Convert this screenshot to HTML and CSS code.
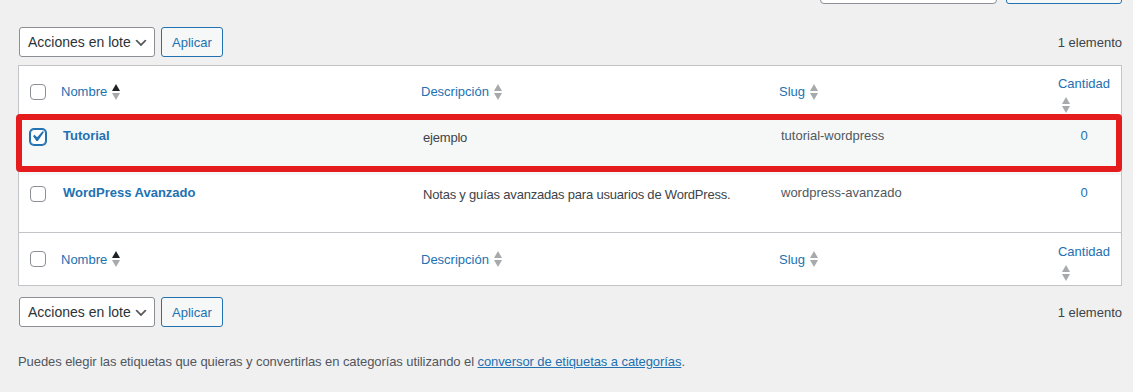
FILE: index.html
```html
<!DOCTYPE html>
<html lang="es">
<head>
    <meta charset="UTF-8">
    <meta name="viewport" content="width=device-width, initial-scale=1.0">
    <title>Etiquetas</title>
    <link rel="stylesheet" href="styles.css">
</head>
<body>
<div class="wrap">

    <!-- caja de busqueda (cortada arriba) -->
    <div class="search-box">
        <span class="search-input"></span>
        <span class="search-btn"></span>
    </div>

    <div class="tablenav top">
        <div class="bulk">
            <div class="select">Acciones en lote
                <svg class="chev" width="16" height="16" viewBox="0 0 20 20"><path d="M5 6l5 5 5-5 2 1-7 7-7-7 2-1z" fill="#555"/></svg>
            </div>
            <button class="button">Aplicar</button>
        </div>
        <div class="count">1 elemento</div>
    </div>

    <div class="table-holder">
        <table class="tags">
            <colgroup>
                <col class="c-check">
                <col class="c-name">
                <col class="c-desc">
                <col class="c-slug">
                <col class="c-num">
            </colgroup>
            <thead>
                <tr>
                    <th class="check"><span class="cb"></span></th>
                    <th><a class="sort-link">Nombre <span class="sort"><i class="up dark"></i><i class="down"></i></span></a></th>
                    <th><a class="sort-link">Descripción <span class="sort"><i class="up"></i><i class="down"></i></span></a></th>
                    <th><a class="sort-link">Slug <span class="sort"><i class="up"></i><i class="down"></i></span></a></th>
                    <th class="num"><a class="num-link">Cantidad<span class="sort block"><i class="up"></i><i class="down"></i></span></a></th>
                </tr>
            </thead>
            <tbody>
                <tr class="alt">
                    <th class="check"><span class="cb on"><svg width="21" height="21" viewBox="0 0 20 20"><path d="M14.83 4.89l1.34.94-5.81 8.38H9.02L5.78 9.67l1.34-1.25 2.57 2.4z" fill="#2271b1"/></svg></span></th>
                    <td><a class="row-title">Tutorial</a></td>
                    <td class="desc">ejemplo</td>
                    <td class="slug">tutorial-wordpress</td>
                    <td class="num"><a>0</a></td>
                </tr>
                <tr>
                    <th class="check"><span class="cb"></span></th>
                    <td><a class="row-title">WordPress Avanzado</a></td>
                    <td class="desc">Notas y guías avanzadas para usuarios de WordPress.</td>
                    <td class="slug">wordpress-avanzado</td>
                    <td class="num"><a>0</a></td>
                </tr>
            </tbody>
            <tfoot>
                <tr>
                    <th class="check"><span class="cb"></span></th>
                    <th><a class="sort-link">Nombre <span class="sort"><i class="up dark"></i><i class="down"></i></span></a></th>
                    <th><a class="sort-link">Descripción <span class="sort"><i class="up"></i><i class="down"></i></span></a></th>
                    <th><a class="sort-link">Slug <span class="sort"><i class="up"></i><i class="down"></i></span></a></th>
                    <th class="num"><a class="num-link">Cantidad<span class="sort block"><i class="up"></i><i class="down"></i></span></a></th>
                </tr>
            </tfoot>
        </table>
        <!-- marca roja sobre la fila -->
        <div class="highlight"></div>
    </div>

    <div class="tablenav bottom">
        <div class="bulk">
            <div class="select">Acciones en lote
                <svg class="chev" width="16" height="16" viewBox="0 0 20 20"><path d="M5 6l5 5 5-5 2 1-7 7-7-7 2-1z" fill="#555"/></svg>
            </div>
            <button class="button">Aplicar</button>
        </div>
        <div class="count">1 elemento</div>
    </div>

    <p class="notes">Puedes elegir las etiquetas que quieras y convertirlas en categorías utilizando el <a href="#">conversor de etiquetas a categorías</a>.</p>
</div>
</body>
</html>
```

FILE: styles.css
```css
body {
  margin: 0;
  background-color: #f0f0f1;
  font-family: "Liberation Sans", Arial, sans-serif;
  font-size: 13px;
  color: #3c434a;
  overflow: hidden;
}

.wrap {
  padding: 0 11px 0 18px;
}

.search-box {
  display: flex;
  justify-content: flex-end;
  margin-top: -26px;
  height: 30px;
}
.search-input {
  width: 177px;
  height: 30px;
  box-sizing: border-box;
  background: #fff;
  border: 1px solid #8c8f94;
  border-radius: 4px;
}
.search-btn {
  width: 116px;
  height: 30px;
  margin-left: 9px;
  box-sizing: border-box;
  background: #f6f7f7;
  border: 1px solid #2271b1;
  border-radius: 3px;
}

.tablenav {
  display: flex;
  justify-content: space-between;
  align-items: center;
  height: 30px;
}
.tablenav.top {
  padding-top: 23px;
  margin-bottom: 8px;
}
.tablenav.bottom {
  margin-top: 11px;
}

.bulk {
  display: flex;
  margin-left: 1px;
}

.select {
  display: flex;
  align-items: center;
  justify-content: space-between;
  width: 136px;
  height: 30px;
  box-sizing: border-box;
  padding: 0 5px 0 8px;
  background: #fff;
  border: 1px solid #8c8f94;
  border-radius: 3px;
  font-size: 14px;
  color: #2c3338;
}
.chev {
  margin-top: 1px;
}

.button {
  height: 30px;
  margin-left: 6px;
  padding: 0 10px;
  background: #f6f7f7;
  border: 1px solid #2271b1;
  border-radius: 3px;
  color: #2271b1;
  font-family: inherit;
  font-size: 13px;
}

.count {
  color: #3c434a;
}

/* tabla */
.table-holder {
  position: relative;
}

.tags {
  width: 100%;
  table-layout: fixed;
  border-collapse: separate;
  border-spacing: 0;
  background: #fff;
  border: 1px solid #c3c4c7;
}
.c-check { width: 32px; }
.c-name { width: 360px; }
.c-desc { width: 358px; }
.c-slug { width: 278px; }
.c-num { width: 74px; }

.tags th, .tags td {
  box-sizing: border-box;
  text-align: left;
  font-weight: normal;
  line-height: 19px;
}

.tags thead th {
  height: 52px;
  padding: 0 10px;
  vertical-align: middle;
  border-bottom: 1px solid #c3c4c7;
}
.tags tfoot th {
  height: 53px;
  padding: 0 10px;
  vertical-align: middle;
  border-top: 1px solid #c3c4c7;
}
.tags thead th.num, .tags tfoot th.num {
  padding-top: 4px;
}

.tags tbody td, .tags tbody th {
  height: 57px;
  padding: 8px 10px 8px 12px;
  vertical-align: top;
  color: #50575e;
}
.tags tbody tr.alt td, .tags tbody tr.alt th {
  background: #f6f7f7;
}
.tags tbody td.desc {
  padding-top: 10px;
  color: #3c434a;
  letter-spacing: -0.2px;
}

.tags th.check {
  padding: 0 0 0 11px;
}
.tags tbody th.check {
  padding: 11px 0 0 11px;
}

.cb {
  position: relative;
  display: block;
  width: 16px;
  height: 16px;
  box-sizing: border-box;
  background: #fff;
  border: 1px solid #8c8f94;
  border-radius: 4px;
}
.cb.on {
  border-color: #2271b1;
  box-shadow: 0 0 0 1px #2271b1;
}
.cb svg {
  position: absolute;
  top: -4px;
  left: -4px;
}

a {
  color: #2271b1;
}

.sort-link {
  display: inline-flex;
  align-items: center;
  text-decoration: none;
}

.sort {
  display: inline-flex;
  flex-direction: column;
  gap: 2px;
  margin-left: 5px;
}
.sort i {
  display: block;
  width: 0;
  height: 0;
  border-left: 4px solid transparent;
  border-right: 4px solid transparent;
}
.sort i.up {
  border-bottom: 7px solid #a7aaad;
}
.sort i.down {
  border-top: 7px solid #a7aaad;
}
.sort i.up.dark {
  border-bottom-color: #1d2327;
}
.sort.block {
  display: flex;
  margin: 4px 0 0 4px;
}

.tags .num {
  text-align: center;
}
.num-link {
  display: inline-block;
  text-align: left;
  text-decoration: none;
}
.tags td.num a {
  text-decoration: none;
}
.tags tbody td.num {
  padding-left: 10px;
}

.row-title {
  font-weight: bold;
  text-decoration: none;
  font-size: 13px;
}

.highlight {
  position: absolute;
  left: -2px;
  top: 49px;
  width: 1106px;
  height: 58px;
  box-sizing: border-box;
  border: 6px solid #e41c1e;
  border-radius: 4px;
}

.notes {
  margin: 25px 0 0;
  line-height: 19.5px;
  color: #50575e;
  letter-spacing: -0.08px;
}
.notes a {
  text-decoration: underline;
}
```
